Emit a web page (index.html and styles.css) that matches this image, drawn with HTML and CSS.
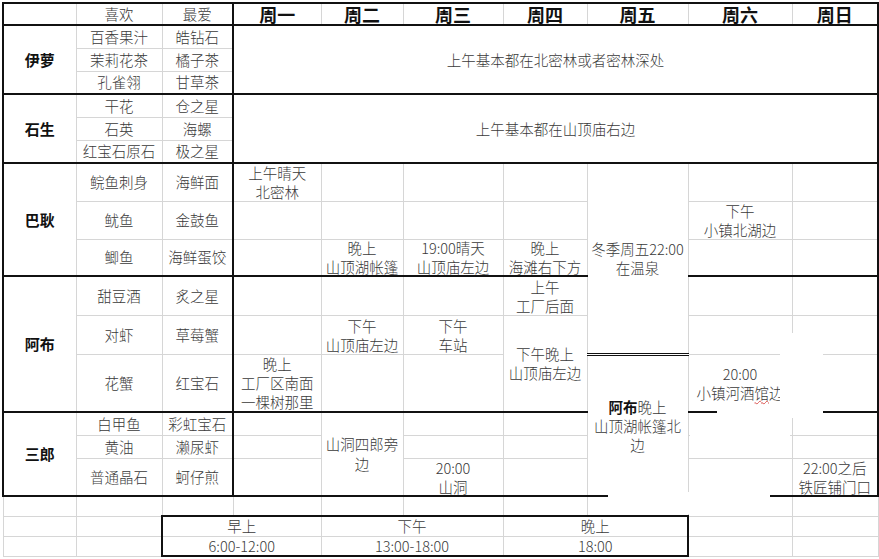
FILE: index.html
```html
<!DOCTYPE html>
<html lang="zh">
<head>
<meta charset="utf-8">
<link rel="stylesheet" href="styles.css">
</head>
<body>
<div class="sheet">
<table class="grid">
<colgroup>
<col class="ca"><col class="cb"><col class="cc"><col class="cd"><col class="ce"><col class="cf"><col class="cg"><col class="ch"><col class="ci"><col class="cj">
</colgroup>
<tr class="hdr">
<td class="lt"></td><td>喜欢</td><td class="sep">最爱</td><td class="day">周一</td><td class="day">周二</td><td class="day">周三</td><td class="day">周四</td><td class="day">周五</td><td class="day">周六</td><td class="day rt">周日</td>
</tr>
<tr class="g r23">
<td rowspan="3" class="name lt">伊萝</td><td>百香果汁</td><td class="sep">皓钻石</td><td colspan="7" rowspan="3" class="rt">上午基本都在北密林或者密林深处</td>
</tr>
<tr class="r23"><td>茉莉花茶</td><td class="sep">橘子茶</td></tr>
<tr class="r23"><td>孔雀翎</td><td class="sep">甘草茶</td></tr>
<tr class="g r23">
<td rowspan="3" class="name lt">石生</td><td>干花</td><td class="sep">仓之星</td><td colspan="7" rowspan="3" class="rt">上午基本都在山顶庙右边</td>
</tr>
<tr class="r23"><td>石英</td><td class="sep">海螺</td></tr>
<tr class="r23"><td>红宝石原石</td><td class="sep">极之星</td></tr>
<tr class="g r38">
<td rowspan="3" class="name lt">巴耿</td><td>鲩鱼刺身</td><td class="sep">海鲜面</td><td><div class="m"><span>上午晴天</span><span>北密林</span></div></td><td></td><td></td><td></td><td rowspan="5"><div class="m"><span>冬季周五22:00</span><span>在温泉</span></div></td><td></td><td class="rt"></td>
</tr>
<tr class="r38"><td>鱿鱼</td><td class="sep">金鼓鱼</td><td></td><td></td><td></td><td></td><td><div class="m"><span>下午</span><span>小镇北湖边</span></div></td><td class="rt"></td></tr>
<tr class="r37"><td>鲫鱼</td><td class="sep">海鲜蛋饺</td><td></td><td><div class="m"><span>晚上</span><span>山顶湖帐篷</span></div></td><td><div class="m"><span>19:00晴天</span><span>山顶庙左边</span></div></td><td><div class="m"><span>晚上</span><span>海滩右下方</span></div></td><td></td><td class="rt"></td></tr>
<tr class="g r39">
<td rowspan="3" class="name lt">阿布</td><td>甜豆酒</td><td class="sep">炙之星</td><td></td><td></td><td></td><td><div class="m"><span>上午</span><span>工厂后面</span></div></td><td></td><td class="rt"></td>
</tr>
<tr class="r39"><td>对虾</td><td class="sep">草莓蟹</td><td></td><td><div class="m"><span>下午</span><span>山顶庙左边</span></div></td><td><div class="m"><span>下午</span><span>车站</span></div></td><td rowspan="2"><div class="m"><span>下午晚上</span><span>山顶庙左边</span></div></td><td></td><td class="rt"></td></tr>
<tr class="r58"><td>花蟹</td><td class="sep">红宝石</td><td><div class="m"><span>晚上</span><span>工厂区南面</span><span>一棵树那里</span></div></td><td></td><td></td><td rowspan="4" class="dbl"><div class="m"><span><b>阿布</b>晚上</span><span>山顶湖帐篷北</span><span>边</span></div></td><td><div class="m"><span>20:00</span><span>小镇河酒<span class="typo">馆</span>边</span></div></td><td class="rt"></td></tr>
<tr class="g r23">
<td rowspan="3" class="name lt">三郎</td><td>白甲鱼</td><td class="sep">彩虹宝石</td><td></td><td rowspan="3"><div class="m lh20"><span>山洞四郎旁</span><span>边</span></div></td><td></td><td></td><td></td><td class="rt"></td>
</tr>
<tr class="r23"><td>黄油</td><td class="sep">濑尿虾</td><td></td><td></td><td></td><td></td><td class="rt"></td></tr>
<tr class="r38"><td>普通晶石</td><td class="sep">蚵仔煎</td><td></td><td><div class="m"><span>20:00</span><span>山洞</span></div></td><td></td><td></td><td class="rt"><div class="m"><span>22:00之后</span><span>铁匠铺门口</span></div></td></tr>
<tr class="r20 after"><td></td><td></td><td></td><td></td><td></td><td></td><td></td><td></td><td></td><td></td></tr>
<tr class="r20 leg1"><td></td><td></td><td colspan="2" class="lg ll">早上</td><td colspan="2" class="lg">下午</td><td colspan="2" class="lg lr">晚上</td><td></td><td></td></tr>
<tr class="r20 leg2"><td></td><td></td><td colspan="2" class="lg ll">6:00-12:00</td><td colspan="2" class="lg">13:00-18:00</td><td colspan="2" class="lg lr">18:00</td><td></td><td></td></tr>
</table>
<div class="patch p1"></div>
<div class="patch p2"></div>
<div class="patch p3"></div>
<div class="patch p4"></div>
<div class="patch p5"></div>
</div>
</body>
</html>
```
FILE: styles.css
```css
html, body {
  margin: 0;
  padding: 0;
  background: #fff;
}
.sheet {
  position: relative;
  width: 879px;
  height: 559px;
  overflow: hidden;
  padding: 2px 0 0 2px;
  box-sizing: border-box;
}
.grid {
  border-collapse: collapse;
  table-layout: fixed;
  width: 875px;
  font-family: "Noto Sans CJK SC", "Microsoft YaHei", sans-serif;
  font-size: 14.5px;
  font-weight: 300;
  line-height: 18px;
  color: #3a3a3a;
}
.ca { width: 73px; }
.cb { width: 86px; }
.cc { width: 71px; }
.cd { width: 88px; }
.ce { width: 82px; }
.cf { width: 100px; }
.cg { width: 84px; }
.ch { width: 101px; }
.ci { width: 104px; }
.cj { width: 86px; }
.grid td {
  border: 1px solid #d6d6d6;
  padding: 0 1px;
  text-align: center;
  vertical-align: middle;
  white-space: nowrap;
  overflow: visible;
}
.m {
  height: 0;
  display: flex;
  flex-direction: column;
  align-items: center;
  justify-content: center;
  line-height: 19px;
}
.m.lh20 { line-height: 20px; }
.m > span { display: block; }
.hdr { height: 22px; }
.hdr td { border-top: 2px solid #111; }
.hdr .day {
  font-weight: 700;
  font-size: 18px;
  color: #111;
}
.r23 { height: 23px; }
.r37 { height: 37px; }
.r38 { height: 38px; }
.r39 { height: 39px; }
.r58 { height: 58px; }
.r20 { height: 20px; }
.g > td { border-top: 2px solid #111; }
.grid td.sep { border-right: 2px solid #111; }
.grid td.lt { border-left: 2px solid #111; }
.grid td.rt { border-right: 2px solid #111; }
.grid td.name {
  font-weight: 700;
  font-size: 15px;
  color: #111;
}
.grid td.dbl { border-top: 3px double #111; }
.after > td { border-top: 2px solid #111; }
.leg1 .lg { border-top: 2px solid #111; }
.leg2 .lg { border-bottom: 2px solid #111; }
.grid td.ll { border-left: 2px solid #111; }
.grid td.lr { border-right: 2px solid #111; }
.typo {
  text-decoration: underline wavy #d9534f;
  text-decoration-thickness: 1px;
  text-underline-offset: 1px;
}
b { font-weight: 700; color: #111; }
.patch {
  position: absolute;
  background: #fff;
}
.p1 { left: 717px; top: 408px; width: 106px; height: 10px; }
.p2 { left: 780px; top: 333px; width: 43px; height: 75px; }
.p3 { left: 608px; top: 492px; width: 162px; height: 10px; }
.p4 { left: 690px; top: 418px; width: 100px; height: 40px; }
.p5 { left: 620px; top: 502px; width: 130px; height: 12px; }
```
